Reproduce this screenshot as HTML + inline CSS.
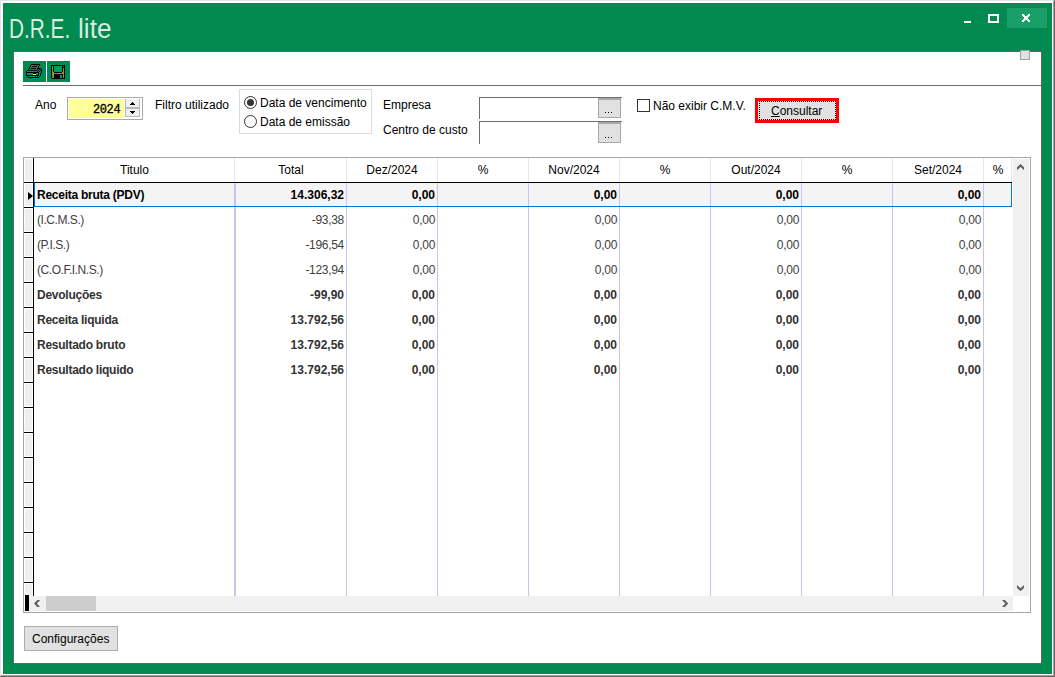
<!DOCTYPE html>
<html><head><meta charset="utf-8">
<style>
*{box-sizing:border-box;margin:0;padding:0}
html,body{width:1055px;height:677px;overflow:hidden;background:#696969;position:relative}
.a{position:absolute}
.t{position:absolute;font-family:"Liberation Sans",sans-serif;font-size:12px;line-height:12px;white-space:pre;color:#000}
.b{font-weight:bold}
.hd{position:absolute;top:158px;height:24px;background:#e6e6e6;width:1px}
.vs{position:absolute;top:183px;height:413px;background:#cbc3e8;width:1px}
.ind{position:absolute;left:24px;width:9px;height:24px;background:#efefef;border-left:1px solid #fff;border-right:1px solid #fff;border-top:1px solid #fff;border-bottom:1px solid #fff}
.hl{position:absolute;left:24px;width:9px;height:1px;background:#000}
.ht{top:164px;text-align:center}
.r{text-align:right}
.g{color:#404040;letter-spacing:-0.3px}
.d{color:#333}
.k{color:#000}
</style></head><body>
<div class="a" style="left:0;top:0;width:1054px;height:676px;background:#e3e3e3"></div>
<div class="a" style="left:1px;top:1px;width:1053px;height:675px;background:#a0a0a0"></div>
<div class="a" style="left:1px;top:1px;width:1052px;height:674px;background:#fff"></div>
<div class="a" style="left:3px;top:3px;width:1049px;height:671px;background:#008a50"></div>

<!-- title -->
<div class="t" style="left:9px;top:14px;font-size:27px;line-height:30px;color:rgba(255,255,255,0.85);transform:scaleX(0.77);transform-origin:0 0">D.R.E.</div><div class="t" style="left:78px;top:14px;font-size:27px;line-height:30px;color:rgba(255,255,255,0.85);transform:scaleX(0.97);transform-origin:0 0">lite</div>

<!-- window buttons -->
<div class="a" style="left:964px;top:21px;width:7px;height:2px;background:#fff"></div>
<div class="a" style="left:988px;top:14px;width:11px;height:9px;border:2px solid #fff"></div>
<div class="a" style="left:1007px;top:8px;width:40px;height:20px;background:#18a068"></div>
<svg class="a" style="left:1022px;top:14px" width="8" height="8" viewBox="0 0 8 8" shape-rendering="crispEdges"><rect x="0" y="0" width="2" height="1" fill="#fff"/><rect x="6" y="0" width="2" height="1" fill="#fff"/><rect x="0" y="1" width="3" height="1" fill="#fff"/><rect x="5" y="1" width="3" height="1" fill="#fff"/><rect x="1" y="2" width="6" height="1" fill="#fff"/><rect x="2" y="3" width="4" height="1" fill="#fff"/><rect x="2" y="4" width="4" height="1" fill="#fff"/><rect x="1" y="5" width="6" height="1" fill="#fff"/><rect x="0" y="6" width="3" height="1" fill="#fff"/><rect x="5" y="6" width="3" height="1" fill="#fff"/><rect x="0" y="7" width="2" height="1" fill="#fff"/><rect x="6" y="7" width="2" height="1" fill="#fff"/></svg>

<!-- panel -->
<div class="a" style="left:13px;top:51px;width:1029px;height:613px;background:#fff;border:1px solid #646464"></div>
<div class="a" style="left:1020px;top:50px;width:10px;height:10px;background:#e1e1e1;border:1px solid #a0a0a0"></div>

<!-- toolbar -->
<div class="a" style="left:23px;top:61px;width:23px;height:21px;background:#008a50"></div>
<div class="a" style="left:47px;top:61px;width:23px;height:21px;background:#008a50"></div>
<svg class="a" style="left:25px;top:63px" width="18" height="16" viewBox="0 0 18 16" shape-rendering="crispEdges"><rect x="6" y="1" width="9" height="1" fill="#000"/><rect x="5" y="2" width="1" height="1" fill="#000"/><rect x="14" y="2" width="1" height="1" fill="#000"/><rect x="5" y="3" width="1" height="1" fill="#000"/><rect x="7" y="3" width="5" height="1" fill="#000"/><rect x="13" y="3" width="1" height="1" fill="#000"/><rect x="4" y="4" width="1" height="1" fill="#000"/><rect x="13" y="4" width="1" height="1" fill="#000"/><rect x="4" y="5" width="1" height="1" fill="#000"/><rect x="6" y="5" width="5" height="1" fill="#000"/><rect x="12" y="5" width="4" height="1" fill="#000"/><rect x="3" y="6" width="1" height="1" fill="#000"/><rect x="12" y="6" width="1" height="1" fill="#000"/><rect x="13" y="6" width="1" height="1" fill="#008f8f"/><rect x="14" y="6" width="1" height="1" fill="#000"/><rect x="15" y="6" width="1" height="1" fill="#008f8f"/><rect x="16" y="6" width="1" height="1" fill="#000"/><rect x="2" y="7" width="10" height="1" fill="#000"/><rect x="12" y="7" width="1" height="1" fill="#008f8f"/><rect x="13" y="7" width="1" height="1" fill="#000"/><rect x="14" y="7" width="1" height="1" fill="#008f8f"/><rect x="15" y="7" width="2" height="1" fill="#000"/><rect x="1" y="8" width="1" height="1" fill="#000"/><rect x="2" y="8" width="10" height="1" fill="#008f8f"/><rect x="12" y="8" width="1" height="1" fill="#000"/><rect x="13" y="8" width="1" height="1" fill="#008f8f"/><rect x="14" y="8" width="1" height="1" fill="#000"/><rect x="15" y="8" width="1" height="1" fill="#008f8f"/><rect x="16" y="8" width="1" height="1" fill="#000"/><rect x="1" y="9" width="13" height="1" fill="#000"/><rect x="14" y="9" width="2" height="1" fill="#008f8f"/><rect x="16" y="9" width="1" height="1" fill="#000"/><rect x="1" y="10" width="1" height="1" fill="#000"/><rect x="2" y="10" width="6" height="1" fill="#008f8f"/><rect x="8" y="10" width="3" height="1" fill="#000"/><rect x="11" y="10" width="2" height="1" fill="#008f8f"/><rect x="13" y="10" width="1" height="1" fill="#000"/><rect x="14" y="10" width="1" height="1" fill="#008f8f"/><rect x="15" y="10" width="1" height="1" fill="#000"/><rect x="1" y="11" width="1" height="1" fill="#000"/><rect x="2" y="11" width="6" height="1" fill="#008f8f"/><rect x="8" y="11" width="3" height="1" fill="#ffff00"/><rect x="11" y="11" width="2" height="1" fill="#008f8f"/><rect x="13" y="11" width="1" height="1" fill="#000"/><rect x="14" y="11" width="1" height="1" fill="#008f8f"/><rect x="15" y="11" width="1" height="1" fill="#000"/><rect x="1" y="12" width="13" height="1" fill="#000"/><rect x="14" y="12" width="1" height="1" fill="#008f8f"/><rect x="15" y="12" width="1" height="1" fill="#000"/><rect x="2" y="13" width="1" height="1" fill="#000"/><rect x="3" y="13" width="9" height="1" fill="#008f8f"/><rect x="12" y="13" width="1" height="1" fill="#000"/><rect x="13" y="13" width="1" height="1" fill="#008f8f"/><rect x="14" y="13" width="1" height="1" fill="#000"/><rect x="3" y="14" width="11" height="1" fill="#000"/></svg><svg class="a" style="left:50px;top:64px" width="16" height="16" viewBox="0 0 16 16" shape-rendering="crispEdges"><rect x="1" y="1" width="14" height="1" fill="#000"/><rect x="1" y="2" width="1" height="1" fill="#000"/><rect x="2" y="2" width="1" height="1" fill="#9a9400"/><rect x="3" y="2" width="1" height="1" fill="#000"/><rect x="4" y="2" width="8" height="1" fill="#009a5a"/><rect x="12" y="2" width="1" height="1" fill="#000"/><rect x="13" y="2" width="1" height="1" fill="#009a5a"/><rect x="14" y="2" width="1" height="1" fill="#000"/><rect x="1" y="3" width="1" height="1" fill="#000"/><rect x="2" y="3" width="1" height="1" fill="#9a9400"/><rect x="3" y="3" width="1" height="1" fill="#000"/><rect x="4" y="3" width="8" height="1" fill="#009a5a"/><rect x="12" y="3" width="3" height="1" fill="#000"/><rect x="1" y="4" width="1" height="1" fill="#000"/><rect x="2" y="4" width="1" height="1" fill="#9a9400"/><rect x="3" y="4" width="1" height="1" fill="#000"/><rect x="4" y="4" width="8" height="1" fill="#009a5a"/><rect x="12" y="4" width="1" height="1" fill="#000"/><rect x="13" y="4" width="1" height="1" fill="#9a9400"/><rect x="14" y="4" width="1" height="1" fill="#000"/><rect x="1" y="5" width="1" height="1" fill="#000"/><rect x="2" y="5" width="1" height="1" fill="#9a9400"/><rect x="3" y="5" width="1" height="1" fill="#000"/><rect x="4" y="5" width="8" height="1" fill="#009a5a"/><rect x="12" y="5" width="1" height="1" fill="#000"/><rect x="13" y="5" width="1" height="1" fill="#9a9400"/><rect x="14" y="5" width="1" height="1" fill="#000"/><rect x="1" y="6" width="1" height="1" fill="#000"/><rect x="2" y="6" width="1" height="1" fill="#9a9400"/><rect x="3" y="6" width="1" height="1" fill="#000"/><rect x="4" y="6" width="8" height="1" fill="#009a5a"/><rect x="12" y="6" width="1" height="1" fill="#000"/><rect x="13" y="6" width="1" height="1" fill="#9a9400"/><rect x="14" y="6" width="1" height="1" fill="#000"/><rect x="1" y="7" width="1" height="1" fill="#000"/><rect x="2" y="7" width="1" height="1" fill="#9a9400"/><rect x="3" y="7" width="1" height="1" fill="#000"/><rect x="4" y="7" width="8" height="1" fill="#009a5a"/><rect x="12" y="7" width="1" height="1" fill="#000"/><rect x="13" y="7" width="1" height="1" fill="#9a9400"/><rect x="14" y="7" width="1" height="1" fill="#000"/><rect x="1" y="8" width="1" height="1" fill="#000"/><rect x="2" y="8" width="2" height="1" fill="#9a9400"/><rect x="4" y="8" width="8" height="1" fill="#000"/><rect x="12" y="8" width="2" height="1" fill="#9a9400"/><rect x="14" y="8" width="1" height="1" fill="#000"/><rect x="1" y="9" width="1" height="1" fill="#000"/><rect x="2" y="9" width="12" height="1" fill="#9a9400"/><rect x="14" y="9" width="1" height="1" fill="#000"/><rect x="1" y="10" width="1" height="1" fill="#000"/><rect x="2" y="10" width="2" height="1" fill="#9a9400"/><rect x="4" y="10" width="9" height="1" fill="#000"/><rect x="13" y="10" width="1" height="1" fill="#9a9400"/><rect x="14" y="10" width="1" height="1" fill="#000"/><rect x="1" y="11" width="1" height="1" fill="#000"/><rect x="2" y="11" width="2" height="1" fill="#9a9400"/><rect x="4" y="11" width="6" height="1" fill="#000"/><rect x="10" y="11" width="2" height="1" fill="#009a5a"/><rect x="12" y="11" width="1" height="1" fill="#000"/><rect x="13" y="11" width="1" height="1" fill="#9a9400"/><rect x="14" y="11" width="1" height="1" fill="#000"/><rect x="1" y="12" width="1" height="1" fill="#000"/><rect x="2" y="12" width="2" height="1" fill="#9a9400"/><rect x="4" y="12" width="6" height="1" fill="#000"/><rect x="10" y="12" width="2" height="1" fill="#009a5a"/><rect x="12" y="12" width="1" height="1" fill="#000"/><rect x="13" y="12" width="1" height="1" fill="#9a9400"/><rect x="14" y="12" width="1" height="1" fill="#000"/><rect x="1" y="13" width="1" height="1" fill="#000"/><rect x="2" y="13" width="2" height="1" fill="#9a9400"/><rect x="4" y="13" width="6" height="1" fill="#000"/><rect x="10" y="13" width="2" height="1" fill="#009a5a"/><rect x="12" y="13" width="1" height="1" fill="#000"/><rect x="13" y="13" width="1" height="1" fill="#9a9400"/><rect x="14" y="13" width="1" height="1" fill="#000"/><rect x="2" y="14" width="13" height="1" fill="#000"/></svg>
<div class="a" style="left:23px;top:85px;width:1018px;height:1px;background:#6d6d6d"></div>

<!-- Ano -->
<div class="t" style="left:35px;top:99px">Ano</div>
<div class="a" style="left:67px;top:97px;width:76px;height:23px;border:1px solid #a9a9a9;background:#fff"></div>
<div class="a" style="left:69px;top:99px;width:55px;height:19px;background:#ffff99"></div>
<div class="t" style="left:93px;top:104px;font-family:'Liberation Mono',monospace;font-size:12px;line-height:12px;font-weight:normal;letter-spacing:-0.4px;-webkit-text-stroke:0.3px #000">2024</div>
<div class="a" style="left:125px;top:99px;width:15px;height:18px;background:#efefef;border:1px solid #b9b9b9;border-top:0"></div><div class="a" style="left:126px;top:107px;width:13px;height:2px;background:#b9b9b9"></div><svg class="a" style="left:130px;top:102px" width="5" height="12" viewBox="0 0 5 12" shape-rendering="crispEdges"><rect x="2" y="0" width="1" height="1"/><rect x="1" y="1" width="3" height="1"/><rect x="0" y="2" width="5" height="1"/><rect x="0" y="9" width="5" height="1"/><rect x="1" y="10" width="3" height="1"/><rect x="2" y="11" width="1" height="1"/></svg>


<div class="t" style="left:155px;top:99px">Filtro utilizado</div>
<div class="a" style="left:239px;top:89px;width:133px;height:45px;border:1px solid #dcdcdc"></div>
<div class="a" style="left:244px;top:96px;width:13px;height:13px;border:1px solid #333;border-radius:50%;background:#fff"></div>
<div class="a" style="left:247px;top:99px;width:7px;height:7px;border-radius:50%;background:#333"></div>
<div class="a" style="left:244px;top:115px;width:13px;height:13px;border:1px solid #333;border-radius:50%;background:#fff"></div>
<div class="t" style="left:260px;top:97px">Data de vencimento</div>
<div class="t" style="left:260px;top:116px">Data de emissão</div>

<div class="t" style="left:383px;top:99px">Empresa</div>
<div class="t" style="left:383px;top:124px">Centro de custo</div>
<div class="a" style="left:479px;top:97px;width:143px;height:22px;border-top:1px solid #6d6d6d;border-left:1px solid #6d6d6d"></div>
<div class="a" style="left:598px;top:98px;width:23px;height:20px;background:#e1e1e1;border:1px solid #a8a8a8;border-top:2px solid #a8a8a8"></div>
<svg class="a" style="left:605px;top:112px" width="7" height="1" shape-rendering="crispEdges"><rect x="0" width="1" height="1" fill="#100030"/><rect x="3" width="1" height="1" fill="#100030"/><rect x="6" width="1" height="1" fill="#100030"/></svg>
<div class="a" style="left:479px;top:121px;width:143px;height:23px;border-top:1px solid #6d6d6d;border-left:1px solid #6d6d6d"></div>
<div class="a" style="left:598px;top:122px;width:23px;height:21px;background:#e1e1e1;border:1px solid #a8a8a8;border-top:2px solid #a8a8a8"></div>
<svg class="a" style="left:605px;top:137px" width="7" height="1" shape-rendering="crispEdges"><rect x="0" width="1" height="1" fill="#100030"/><rect x="3" width="1" height="1" fill="#100030"/><rect x="6" width="1" height="1" fill="#100030"/></svg>

<div class="a" style="left:637px;top:99px;width:13px;height:13px;border:1px solid #333;background:#fff"></div>
<div class="t" style="left:653px;top:100px">Não exibir C.M.V.</div>

<div class="a" style="left:755px;top:98px;width:84px;height:25px;background:#e1e1e1;border:3px solid #f00"></div>
<div class="a" style="left:759px;top:101px;width:77px;height:19px;border:1px dotted #000"></div>
<div class="t" style="left:771px;top:105px"><u>C</u>onsultar</div>

<!-- grid -->
<div class="a" style="left:23px;top:157px;width:1008px;height:456px;border:1px solid #a6a6a6;background:#fff"></div>
<div class="hd" style="left:234px"></div>
<div class="hd" style="left:346px"></div>
<div class="hd" style="left:437px"></div>
<div class="hd" style="left:528px"></div>
<div class="hd" style="left:619px"></div>
<div class="hd" style="left:710px"></div>
<div class="hd" style="left:801px"></div>
<div class="hd" style="left:892px"></div>
<div class="hd" style="left:983px"></div>
<div class="vs" style="left:235px"></div>
<div class="vs" style="left:346px"></div>
<div class="vs" style="left:437px"></div>
<div class="vs" style="left:528px"></div>
<div class="vs" style="left:619px"></div>
<div class="vs" style="left:710px"></div>
<div class="vs" style="left:801px"></div>
<div class="vs" style="left:892px"></div>
<div class="vs" style="left:983px"></div>
<div class="vs" style="left:234px"></div>
<div class="a" style="left:34px;top:182px;width:978px;height:25px;background:#f4f4f4;border:1px solid #0078d7;border-top:0"></div>
<div class="a" style="left:235px;top:183px;width:1px;height:23px;background:#cbc3e8"></div>
<div class="a" style="left:346px;top:183px;width:1px;height:23px;background:#cbc3e8"></div>
<div class="a" style="left:437px;top:183px;width:1px;height:23px;background:#cbc3e8"></div>
<div class="a" style="left:528px;top:183px;width:1px;height:23px;background:#cbc3e8"></div>
<div class="a" style="left:619px;top:183px;width:1px;height:23px;background:#cbc3e8"></div>
<div class="a" style="left:710px;top:183px;width:1px;height:23px;background:#cbc3e8"></div>
<div class="a" style="left:801px;top:183px;width:1px;height:23px;background:#cbc3e8"></div>
<div class="a" style="left:892px;top:183px;width:1px;height:23px;background:#cbc3e8"></div>
<div class="a" style="left:983px;top:183px;width:1px;height:23px;background:#cbc3e8"></div>
<div class="a" style="left:234px;top:183px;width:1px;height:23px;background:#cbc3e8"></div>
<div class="a" style="left:24px;top:182px;width:988px;height:1px;background:#000"></div>
<div class="a" style="left:33px;top:158px;width:1px;height:438px;background:#000"></div>
<div class="ind" style="top:158px;height:24px"></div>
<div class="ind" style="top:183px;height:24px"></div>
<div class="ind" style="top:208px;height:24px"></div>
<div class="ind" style="top:233px;height:24px"></div>
<div class="ind" style="top:258px;height:24px"></div>
<div class="ind" style="top:283px;height:24px"></div>
<div class="ind" style="top:308px;height:24px"></div>
<div class="ind" style="top:333px;height:24px"></div>
<div class="ind" style="top:358px;height:24px"></div>
<div class="ind" style="top:383px;height:24px"></div>
<div class="ind" style="top:408px;height:24px"></div>
<div class="ind" style="top:433px;height:24px"></div>
<div class="ind" style="top:458px;height:24px"></div>
<div class="ind" style="top:483px;height:24px"></div>
<div class="ind" style="top:508px;height:24px"></div>
<div class="ind" style="top:533px;height:24px"></div>
<div class="ind" style="top:558px;height:24px"></div>
<div class="ind" style="top:583px;height:13px"></div>
<div class="hl" style="top:182px"></div>
<div class="hl" style="top:207px"></div>
<div class="hl" style="top:232px"></div>
<div class="hl" style="top:257px"></div>
<div class="hl" style="top:282px"></div>
<div class="hl" style="top:307px"></div>
<div class="hl" style="top:332px"></div>
<div class="hl" style="top:357px"></div>
<div class="hl" style="top:382px"></div>
<div class="hl" style="top:407px"></div>
<div class="hl" style="top:432px"></div>
<div class="hl" style="top:457px"></div>
<div class="hl" style="top:482px"></div>
<div class="hl" style="top:507px"></div>
<div class="hl" style="top:532px"></div>
<div class="hl" style="top:557px"></div>
<div class="hl" style="top:582px"></div>
<svg class="a" style="left:28px;top:192px" width="5" height="8" viewBox="0 0 5 8"><path d="M0 0L5 4L0 8Z" fill="#000"/></svg>
<div class="t ht" style="left:34px;width:201px">Titulo</div>
<div class="t ht" style="left:236px;width:110px">Total</div>
<div class="t ht" style="left:347px;width:90px">Dez/2024</div>
<div class="t ht" style="left:438px;width:90px">%</div>
<div class="t ht" style="left:529px;width:90px">Nov/2024</div>
<div class="t ht" style="left:620px;width:90px">%</div>
<div class="t ht" style="left:711px;width:90px">Out/2024</div>
<div class="t ht" style="left:802px;width:90px">%</div>
<div class="t ht" style="left:893px;width:90px">Set/2024</div>
<div class="t ht" style="left:984px;width:28px">%</div>
<div class="t b k" style="left:37px;top:189px;letter-spacing:-0.25px">Receita bruta (PDV)</div>
<div class="t r b k" style="left:236px;width:108px;top:189px">14.306,32</div>
<div class="t r b k" style="left:347px;width:88px;top:189px">0,00</div>
<div class="t r b k" style="left:529px;width:88px;top:189px">0,00</div>
<div class="t r b k" style="left:711px;width:88px;top:189px">0,00</div>
<div class="t r b k" style="left:893px;width:88px;top:189px">0,00</div>
<div class="t g" style="left:37px;top:214px;letter-spacing:-0.45px">(I.C.M.S.)</div>
<div class="t r g" style="left:236px;width:108px;top:214px">-93,38</div>
<div class="t r g" style="left:347px;width:88px;top:214px">0,00</div>
<div class="t r g" style="left:529px;width:88px;top:214px">0,00</div>
<div class="t r g" style="left:711px;width:88px;top:214px">0,00</div>
<div class="t r g" style="left:893px;width:88px;top:214px">0,00</div>
<div class="t g" style="left:37px;top:239px;letter-spacing:-0.45px">(P.I.S.)</div>
<div class="t r g" style="left:236px;width:108px;top:239px">-196,54</div>
<div class="t r g" style="left:347px;width:88px;top:239px">0,00</div>
<div class="t r g" style="left:529px;width:88px;top:239px">0,00</div>
<div class="t r g" style="left:711px;width:88px;top:239px">0,00</div>
<div class="t r g" style="left:893px;width:88px;top:239px">0,00</div>
<div class="t g" style="left:37px;top:264px;letter-spacing:-0.45px">(C.O.F.I.N.S.)</div>
<div class="t r g" style="left:236px;width:108px;top:264px">-123,94</div>
<div class="t r g" style="left:347px;width:88px;top:264px">0,00</div>
<div class="t r g" style="left:529px;width:88px;top:264px">0,00</div>
<div class="t r g" style="left:711px;width:88px;top:264px">0,00</div>
<div class="t r g" style="left:893px;width:88px;top:264px">0,00</div>
<div class="t b d" style="left:37px;top:289px;letter-spacing:-0.25px">Devoluções</div>
<div class="t r b d" style="left:236px;width:108px;top:289px">-99,90</div>
<div class="t r b d" style="left:347px;width:88px;top:289px">0,00</div>
<div class="t r b d" style="left:529px;width:88px;top:289px">0,00</div>
<div class="t r b d" style="left:711px;width:88px;top:289px">0,00</div>
<div class="t r b d" style="left:893px;width:88px;top:289px">0,00</div>
<div class="t b d" style="left:37px;top:314px;letter-spacing:-0.25px">Receita liquida</div>
<div class="t r b d" style="left:236px;width:108px;top:314px">13.792,56</div>
<div class="t r b d" style="left:347px;width:88px;top:314px">0,00</div>
<div class="t r b d" style="left:529px;width:88px;top:314px">0,00</div>
<div class="t r b d" style="left:711px;width:88px;top:314px">0,00</div>
<div class="t r b d" style="left:893px;width:88px;top:314px">0,00</div>
<div class="t b d" style="left:37px;top:339px;letter-spacing:-0.25px">Resultado bruto</div>
<div class="t r b d" style="left:236px;width:108px;top:339px">13.792,56</div>
<div class="t r b d" style="left:347px;width:88px;top:339px">0,00</div>
<div class="t r b d" style="left:529px;width:88px;top:339px">0,00</div>
<div class="t r b d" style="left:711px;width:88px;top:339px">0,00</div>
<div class="t r b d" style="left:893px;width:88px;top:339px">0,00</div>
<div class="t b d" style="left:37px;top:364px;letter-spacing:-0.25px">Resultado liquido</div>
<div class="t r b d" style="left:236px;width:108px;top:364px">13.792,56</div>
<div class="t r b d" style="left:347px;width:88px;top:364px">0,00</div>
<div class="t r b d" style="left:529px;width:88px;top:364px">0,00</div>
<div class="t r b d" style="left:711px;width:88px;top:364px">0,00</div>
<div class="t r b d" style="left:893px;width:88px;top:364px">0,00</div>
<div class="a" style="left:1011px;top:158px;width:1px;height:24px;background:#e6e6e6"></div>
<div class="a" style="left:1013px;top:159px;width:16px;height:437px;background:#f0f0f0"></div>
<svg class="a" style="left:1016.8px;top:164px" width="7.1" height="6.2" viewBox="0 0 7.1 6.2"><path d="M0 6.2L0 3.3L3.55 0L7.1 3.3L7.1 6.2L3.55 2.9Z" fill="#606060"/></svg>
<svg class="a" style="left:1016.9px;top:584.9px" width="7.1" height="6.2" viewBox="0 0 7.1 6.2"><path d="M0 0L0 2.9L3.55 6.2L7.1 2.9L7.1 0L3.55 3.3Z" fill="#606060"/></svg>
<div class="a" style="left:29px;top:596px;width:984px;height:15px;background:#f0f0f0"></div>
<div class="a" style="left:46px;top:596px;width:50px;height:15px;background:#cdcdcd"></div>
<div class="a" style="left:25px;top:595px;width:4px;height:16px;background:#000"></div>
<svg class="a" style="left:33.9px;top:600px" width="6.2" height="7.1" viewBox="0 0 6.2 7.1"><path d="M3.3 0L6.2 0L2.9 3.55L6.2 7.1L3.3 7.1L0 3.55Z" fill="#606060"/></svg>
<svg class="a" style="left:1001.8px;top:599.9px" width="6.2" height="7.1" viewBox="0 0 6.2 7.1"><path d="M2.9 0L0 0L3.3 3.55L0 7.1L2.9 7.1L6.2 3.55Z" fill="#606060"/></svg>
<!-- Configuracoes -->
<div class="a" style="left:24px;top:626px;width:94px;height:25px;background:#e1e1e1;border:1px solid #adadad"></div>
<div class="t" style="left:32px;top:633px">Configurações</div>
</body></html>
